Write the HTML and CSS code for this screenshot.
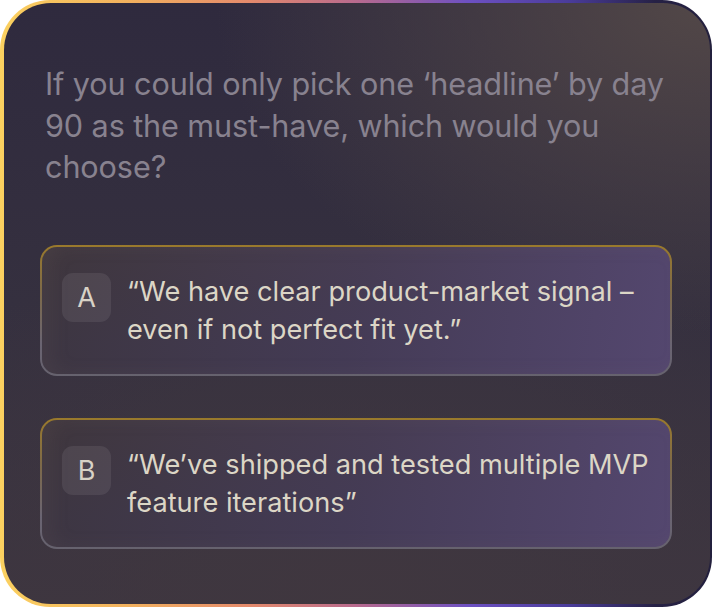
FILE: index.html
```html
<!DOCTYPE html>
<html lang="en">
<head>
<meta charset="utf-8">
<link rel="stylesheet" href="styles.css">
</head>
<body>
<div class="frame">
  <div class="card">
    <p class="question">If you could only pick one ‘headline’ by day 90 as the must-have, which would you choose?</p>
    <div class="options">
      <div class="option">
        <span class="badge">A</span>
        <span class="text">“We have clear product-market signal – even if not perfect fit yet.”</span>
      </div>
      <div class="option">
        <span class="badge">B</span>
        <span class="text">“We’ve shipped and tested multiple MVP feature iterations”</span>
      </div>
    </div>
  </div>
</div>
</body>
</html>
```

FILE: styles.css
```css
html, body {
  margin: 0;
  padding: 0;
  background: #ffffff;
}

body {
  width: 712px;
  height: 608px;
  font-family: Inter, "Noto Sans", sans-serif;
}

.frame {
  width: 712px;
  height: 607px;
  box-sizing: border-box;
  padding: 3px 2px 3px 4px;
  border-radius: 50px;
  background: linear-gradient(90deg, #fbd160 0%, #f2b15e 18%, #e48a6c 35%, #b86a8e 50%, #6c50c2 66%, #4a3c9a 80%, #262145 92%, #23203d 100%);
}

.card {
  height: 100%;
  box-sizing: border-box;
  border-radius: 47px;
  padding: 60px 38px 0 36px;
  background:
    radial-gradient(ellipse 70% 55% at 100% 0%, rgba(84, 73, 72, 0.95), rgba(84, 73, 72, 0) 100%),
    radial-gradient(ellipse 90% 60% at 50% 100%, rgba(64, 55, 63, 0.9), rgba(64, 55, 63, 0) 100%),
    linear-gradient(180deg, #2f2a3e 0%, #35303f 50%, #3c3540 100%);
}

.question {
  margin: 0 -24px 57px 5px;
  color: #88828f;
  font-size: 30.6px;
  line-height: 41.5px;
  font-weight: 400;
  letter-spacing: -0.1px;
}

.options {
  display: flex;
  flex-direction: column;
  gap: 42px;
}

.option {
  display: flex;
  align-items: flex-start;
  gap: 16px;
  height: 131px;
  box-sizing: border-box;
  padding: 26px 8px 0 20px;
  border: 2px solid transparent;
  border-radius: 17px;
  background:
    linear-gradient(100deg, rgba(58, 51, 62, 0.95) 0%, rgba(66, 57, 84, 0.95) 50%, #54476f 100%) padding-box,
    linear-gradient(180deg, #9a7a2c 0%, #7e6a48 35%, #6a6472 75%, #66626e 100%) border-box;
  box-shadow: inset 10px 0 18px rgba(120, 110, 110, 0.12);
}

.badge {
  flex: none;
  width: 49px;
  height: 49px;
  border-radius: 11px;
  background: rgba(255, 255, 255, 0.08);
  color: #d8d2c6;
  font-size: 27px;
  display: flex;
  align-items: center;
  justify-content: center;
}

.text {
  color: #dcd6c6;
  font-size: 27.2px;
  line-height: 38px;
}
```
